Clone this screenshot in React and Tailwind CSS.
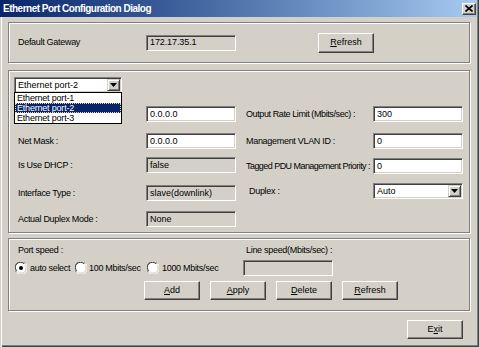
import React from "react";

const FONT = "font-['Liberation_Sans',Arial,sans-serif]";

function Field({ className = "", disabled = false, children }) {
  return (
    <div
      className={`h-[16px] flex items-center pl-[3px] text-[9px] leading-[11px] text-black border border-t-[#808080] border-l-[#808080] border-b-white border-r-white shadow-[inset_1px_1px_0_#404040,inset_-1px_-1px_0_#d4d0c8] ${
        disabled ? "bg-[#d4d0c8]" : "bg-white"
      } ${className}`}
    >
      {children}
    </div>
  );
}

function Btn({ children, className = "" }) {
  return (
    <div
      className={`w-[56px] h-[19px] flex items-center justify-center text-[9px] leading-[11px] text-black bg-[#d4d0c8] border border-t-white border-l-white border-b-[#404040] border-r-[#404040] shadow-[inset_-1px_-1px_0_#808080] ${className}`}
    >
      {children}
    </div>
  );
}

function ArrowBtn() {
  return (
    <div className="w-[13px] h-[12px] flex items-center justify-center bg-[#d4d0c8] border border-t-[#d4d0c8] border-l-[#d4d0c8] border-b-[#404040] border-r-[#404040] shadow-[inset_1px_1px_0_#ffffff,inset_-1px_-1px_0_#808080]">
      <svg width="7" height="4" viewBox="0 0 7 4">
        <path d="M0 0H7L3.5 4Z" fill="#000" />
      </svg>
    </div>
  );
}

function Combo({ className = "", children }) {
  return (
    <div
      className={`h-[16px] flex items-center justify-between pl-[3px] pr-[1px] bg-white text-[9px] leading-[11px] text-black border border-t-[#808080] border-l-[#808080] border-b-white border-r-white shadow-[inset_1px_1px_0_#404040,inset_-1px_-1px_0_#d4d0c8] ${className}`}
    >
      <span>{children}</span>
      <ArrowBtn />
    </div>
  );
}

function Radio({ checked }) {
  return (
    <svg width="12" height="12" viewBox="0 0 12 12" className="shrink-0">
      <circle cx="6" cy="6" r="5.5" fill="#ffffff" />
      <path d="M1.5 10.5 A6 6 0 0 1 10.5 1.5" stroke="#808080" strokeWidth="1" fill="none" />
      <path d="M1.8 8.9 A4.5 4.5 0 0 1 8.9 1.8" stroke="#404040" strokeWidth="1" fill="none" />
      <path d="M10.5 1.5 A6 6 0 0 1 1.5 10.5" stroke="#ffffff" strokeWidth="1" fill="none" />
      <path d="M9.7 3.1 A4.5 4.5 0 0 1 3.1 9.7" stroke="#d4d0c8" strokeWidth="1" fill="none" />
      {checked && <circle cx="6" cy="6" r="2" fill="#000" />}
    </svg>
  );
}

function Label({ className = "", children }) {
  return (
    <div className={`text-[9px] leading-[11px] tracking-[-0.3px] text-black whitespace-nowrap ${className}`}>
      {children}
    </div>
  );
}

function Row({ className = "", label, labelClass = "", children }) {
  return (
    <div className={`flex items-center h-[16px] ${className}`}>
      <Label className={labelClass}>{label}</Label>
      {children}
    </div>
  );
}

export default function App() {
  return (
    <div
      className={`${FONT} w-[479px] h-[347px] bg-[#d4d0c8] flex flex-col overflow-hidden shadow-[inset_1px_0_0_#d4d0c8,inset_2px_0_0_#ffffff,inset_-1px_-1px_0_#404040,inset_-2px_-2px_0_#808080]`}
    >
      {/* Title bar */}
      <div className="w-[477px] h-[17px] shrink-0 flex items-center justify-between pl-[3px] pr-[1px] bg-linear-to-r from-[#0a246a] to-[#a6caf0]">
        <span className="text-white font-bold text-[10px] leading-[12px] tracking-[-0.5px] whitespace-nowrap">
          Ethernet Port Configuration Dialog
        </span>
        <div className="w-[14px] h-[12px] flex items-center justify-center bg-[#d4d0c8] border border-t-[#ffffff] border-l-[#ffffff] border-b-[#404040] border-r-[#404040] shadow-[inset_-1px_-1px_0_#808080]">
          <svg width="8" height="7" viewBox="0 0 8 7">
            <path d="M0.5 0.5L7.5 6.5M7.5 0.5L0.5 6.5" stroke="#000" strokeWidth="1.6" />
          </svg>
        </div>
      </div>

      {/* Group 1 */}
      <div className="ml-[8px] mt-[5px] w-[462px] h-[41px] shrink-0 border border-[#808080] shadow-[inset_1px_1px_0_#ffffff,1px_1px_0_#ffffff] flex items-center">
        <Label className="w-[137px] pl-[9px]">Default Gateway</Label>
        <Field disabled className="w-[90px] tracking-[-0.1px]">172.17.35.1</Field>
        <Btn className="ml-[82px] h-[20px]">
          <span>
            <span className="underline">R</span>efresh
          </span>
        </Btn>
      </div>

      {/* Group 2 */}
      <div className="relative ml-[8px] mt-[7px] w-[462px] h-[163px] shrink-0 border border-[#808080] shadow-[inset_1px_1px_0_#ffffff,1px_1px_0_#ffffff] flex flex-col">
        <Combo className="ml-[5px] mt-[6px] w-[108px]">Ethernet port-2</Combo>

        <div className="flex mt-[13px]">
          <div className="flex flex-col">
            <div className="flex items-center h-[16px]">
              <div className="w-[137px]" />
              <Field className="w-[90px]">0.0.0.0</Field>
            </div>
            <Row className="mt-[11px]" label="Net Mask :" labelClass="w-[137px] pl-[9px]">
              <Field className="w-[90px]">0.0.0.0</Field>
            </Row>
            <Row className="mt-[8px]" label="Is Use DHCP :" labelClass="w-[137px] pl-[9px]">
              <Field disabled className="w-[90px]">false</Field>
            </Row>
            <Row className="mt-[12px]" label="Interface Type :" labelClass="w-[137px] pl-[9px]">
              <Field disabled className="w-[90px]">slave(downlink)</Field>
            </Row>
            <Row className="mt-[10px]" label="Actual Duplex Mode :" labelClass="w-[137px] pl-[9px]">
              <Field disabled className="w-[90px]">None</Field>
            </Row>
          </div>

          <div className="flex flex-col ml-[10px]">
            <Row label="Output Rate Limit (Mbits/sec) :" labelClass="w-[127px] tracking-[-0.4px]">
              <Field className="w-[90px]">300</Field>
            </Row>
            <Row className="mt-[11px]" label="Management VLAN ID :" labelClass="w-[127px]">
              <Field className="w-[90px]">0</Field>
            </Row>
            <Row className="mt-[9px]" label="Tagged PDU Management Priority :" labelClass="w-[127px] tracking-[-0.55px]">
              <Field className="w-[90px]">0</Field>
            </Row>
            <Row className="mt-[9px]" label="Duplex :" labelClass="w-[127px] pl-[3px]">
              <Combo className="w-[90px]">Auto</Combo>
            </Row>
          </div>
        </div>

        {/* Open dropdown list */}
        <div className="absolute left-[5px] top-[21px] w-[108px] bg-white border border-black flex flex-col text-[9px] leading-[10px] tracking-[-0.2px] text-black">
          <div className="h-[10px] pl-[2px]">Ethernet port-1</div>
          <div className="h-[10px] pl-[2px] bg-[#0a246a] text-white outline-1 outline-dotted outline-[#e8d890] -outline-offset-1">
            Ethernet port-2
          </div>
          <div className="h-[10px] pl-[2px]">Ethernet port-3</div>
        </div>
      </div>

      {/* Group 3 */}
      <div className="ml-[8px] mt-[5px] w-[462px] h-[73px] shrink-0 border border-[#808080] shadow-[inset_1px_1px_0_#ffffff,1px_1px_0_#ffffff] flex flex-col">
        <div className="flex mt-[6px] h-[11px]">
          <Label className="w-[237px] pl-[9px]">Port speed :</Label>
          <Label>Line speed(Mbits/sec) :</Label>
        </div>
        <div className="flex items-center mt-[4px] h-[16px]">
          <div className="w-[234px] flex items-center pl-[6px]">
            <div className="w-[60px] flex items-center">
              <Radio checked />
              <Label className="ml-[3px]">auto select</Label>
            </div>
            <div className="w-[72px] flex items-center">
              <Radio />
              <Label className="ml-[2px]">100 Mbits/sec</Label>
            </div>
            <div className="flex items-center">
              <Radio />
              <Label className="ml-[3px]">1000 Mbits/sec</Label>
            </div>
          </div>
          <Field disabled className="w-[90px]"></Field>
        </div>
        <div className="flex mt-[5px] ml-[135px] gap-[10px]">
          <Btn>
            <span>
              <span className="underline">A</span>dd
            </span>
          </Btn>
          <Btn>
            <span>
              <span className="underline">A</span>pply
            </span>
          </Btn>
          <Btn>
            <span>
              <span className="underline">D</span>elete
            </span>
          </Btn>
          <Btn>
            <span>
              <span className="underline">R</span>efresh
            </span>
          </Btn>
        </div>
      </div>

      {/* Exit */}
      <Btn className="ml-[407px] mt-[9px] shrink-0">
        <span>
          E<span className="underline">x</span>it
        </span>
      </Btn>
    </div>
  );
}
